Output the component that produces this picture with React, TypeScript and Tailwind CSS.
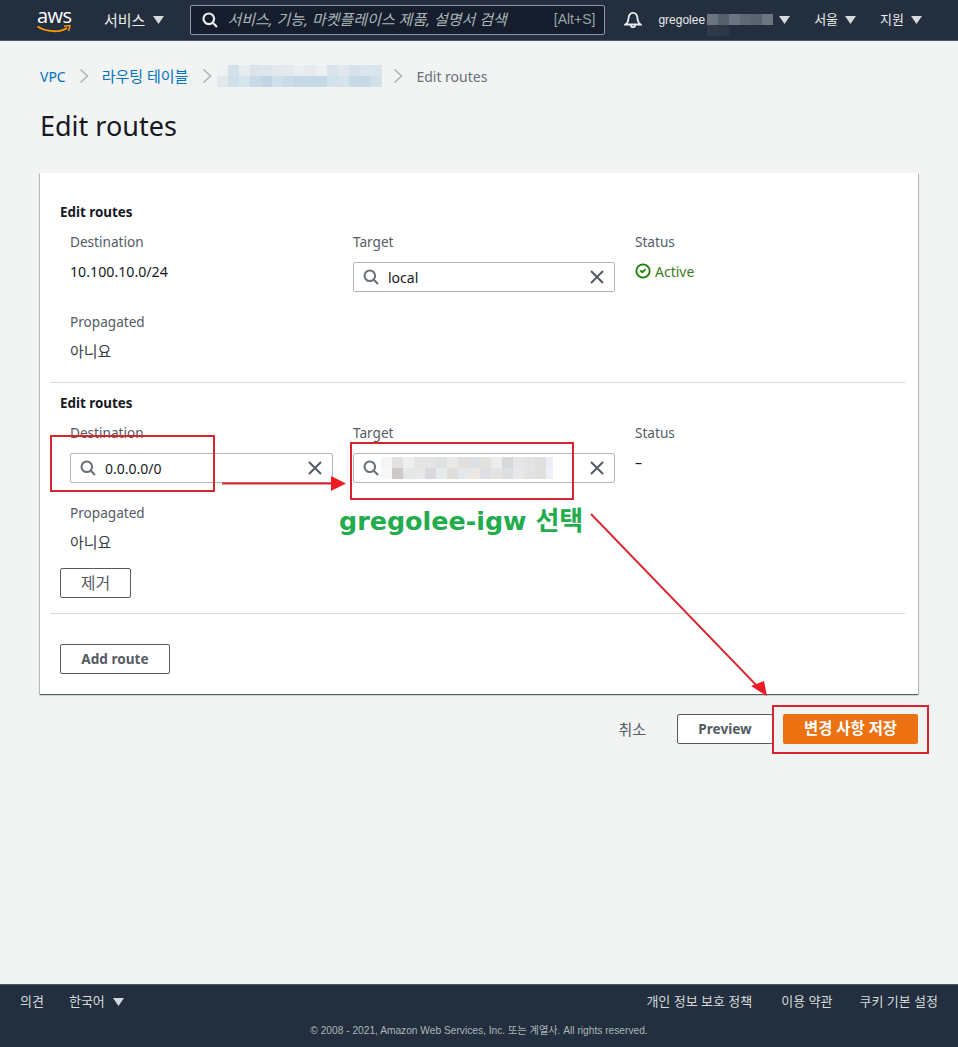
import { CircleCheck } from "lucide-react"

const crumbMosaic = [
  ["#eef1f2", "#d5e1ea", "#e6ecf0", "#dbe4eb", "#dfe6eb", "#e3e8ee", "#e4e9ed", "#ebeef0", "#e8ebee", "#ecf0f1", "#dbe3ec", "#e1e7ef", "#d6e2eb", "#dae5ed", "#dae4ec"],
  ["#e3e8ed", "#cfe0ea", "#d4e5ec", "#c9dae6", "#c2d5e4", "#cfe0ea", "#cadbe6", "#c6d8e6", "#c5d8e6", "#c5d8e6", "#d3e3ec", "#d6e3ea", "#c7d9e6", "#c7d9e6", "#d2e1e9"],
]

const targetMosaic = [
  ["#f4f4f4", "#e2e2e2", "#eeeeee", "#e4e4e4", "#e4e4e4", "#dde3e3", "#e9e9e9", "#e2e0de", "#dde0e2", "#e3e2df", "#ecedec", "#d7d8da", "#e6e6e9", "#e4e2e4", "#dfdfdd", "#e8eff8"],
  ["#f7f7f7", "#cdcac8", "#e2e8e8", "#e7e7e7", "#d9d9de", "#e6ecec", "#e0dedb", "#e3e8ec", "#ebe6e3", "#dddfe3", "#e4e4e2", "#dcdee0", "#e9e7ea", "#e4e2e2", "#e0e0dd", "#ecf2f8"],
]

const userMosaic = [
  ["#6b7480", "#565f6c", "#6c7480", "#5f6874", "#5a6470", "#6d7580"],
  ["#2f3a49", "#2d3846", "#232f3e", "#232f3e", "#232f3e", "#232f3e"],
]

const Mosaic = ({ rows }: { rows: string[][] }) => (
  <div className="flex flex-col">
    {rows.map((row, i) => (
      <div key={i} className="flex">
        {row.map((color, j) => (
          <div key={j} className="w-[11px] h-[11px] shrink-0" style={{ backgroundColor: color }} />
        ))}
      </div>
    ))}
  </div>
)

const Caret = () => (
  <svg width="11" height="8" viewBox="0 0 11 8" className="shrink-0">
    <path d="M0 0h11L5.5 8z" fill="#d5dbdb" />
  </svg>
)

const SearchIcon = ({ color = "#687078", width = 2 }: { color?: string; width?: number }) => (
  <svg width="16" height="16" viewBox="0 0 16 16" fill="none" className="shrink-0">
    <circle cx="6.8" cy="6.8" r="5.3" stroke={color} strokeWidth={width} />
    <path d="M10.8 10.8L15 15" stroke={color} strokeWidth={width} />
  </svg>
)

const ClearIcon = () => (
  <svg width="14" height="14" viewBox="0 0 14 14" fill="none" className="shrink-0">
    <path d="M1 1l12 12M13 1L1 13" stroke="#545b64" strokeWidth="2" />
  </svg>
)

const Chevron = () => (
  <svg width="10" height="16" viewBox="0 0 10 16" fill="none" className="shrink-0">
    <path d="M1.5 1.5L8.5 8l-7 6.5" stroke="#aab7b8" strokeWidth="1.6" />
  </svg>
)

const SearchField = ({ children }: { children: React.ReactNode }) => (
  <div className="flex items-center h-[30px] pl-[9px] pr-[10px] bg-white border border-[#aab7b8] rounded-[2px]">
    <SearchIcon />
    <div className="flex-1 ml-[9px] text-[14px] text-[#16191f]">{children}</div>
    <ClearIcon />
  </div>
)

const FieldLabel = ({ children }: { children: React.ReactNode }) => (
  <div className="h-5 leading-5 text-[13.6px] text-[#545b64]">{children}</div>
)

const RouteHeading = () => (
  <div className="h-5 leading-5 text-[13.4px] font-bold text-[#16191f] ml-[10px]">Edit routes</div>
)

const Propagated = () => (
  <div className="ml-5 mt-[20px]">
    <FieldLabel>Propagated</FieldLabel>
    <div className="mt-[9px] h-5 leading-5 text-[15px] text-[#3a3f47]">아니요</div>
  </div>
)

const OutlineButton = ({ children, className }: { children: React.ReactNode; className: string }) => (
  <button className={`h-[30px] flex items-center justify-center bg-white border border-[#545b64] rounded-[2px] text-[13.6px] font-bold text-[#545b64] ${className}`}>
    {children}
  </button>
)

export default function App() {
  return (
    <div className="relative flex flex-col h-[1047px] overflow-hidden bg-[#f2f3f3] font-['Noto_Sans','Noto_Sans_CJK_KR',sans-serif]">
      <header className="flex items-center h-[41px] shrink-0 bg-[#232f3e] border-b border-[#4b5664] text-[#eaeded] pb-[1px]">
        <div className="relative w-[34px] h-[30px] ml-[37px]">
          <span className="absolute left-0 -top-[2px] text-[20px] leading-[26px] tracking-[-0.5px] text-white font-['Open_Sans',sans-serif]">aws</span>
          <svg width="34" height="9" viewBox="0 0 34 9" fill="none" className="absolute left-0 top-[20px]">
            <path d="M0.5 1.5C9 7 23 8 30 3" stroke="#ff9900" strokeWidth="1.8" />
            <path d="M27 1.2L33 0.6L31.5 6" stroke="#ff9900" strokeWidth="1.4" />
          </svg>
        </div>
        <span className="ml-[33px] text-[15px] leading-5">서비스</span>
        <div className="ml-[8px]"><Caret /></div>
        <div className="flex items-center ml-[26px] w-[415px] h-[30px] pl-[11px] pr-[9px] bg-[#161e2d] border border-[#8d99a5] rounded-[2px]">
          <SearchIcon color="#eaeded" width={2.2} />
          <span className="ml-[9px] flex-1 text-[15px] italic text-[#aab7b8]">서비스, 기능, 마켓플레이스 제품, 설명서 검색</span>
          <span className="text-[14px] text-[#95a5a6] font-['Liberation_Sans',sans-serif]">[Alt+S]</span>
        </div>
        <svg width="18" height="18" viewBox="0 0 18 18" fill="none" className="ml-[19px] shrink-0">
          <path d="M1.5 13.5c2-1.5 2.8-3 3-6C4.8 3.6 6.5 1.8 9 1.8s4.2 1.8 4.5 5.7c.2 3 1 4.5 3 6z" stroke="#eaeded" strokeWidth="1.8" />
          <path d="M6.8 14a2.2 2.2 0 0 0 4.4 0" stroke="#eaeded" strokeWidth="1.8" />
        </svg>
        <span className="ml-[16px] text-[12px] font-['Liberation_Sans',sans-serif]">gregolee</span>
        <div className="ml-[2px] mt-[11px]"><Mosaic rows={userMosaic} /></div>
        <div className="ml-[6px]"><Caret /></div>
        <span className="ml-[24px] text-[13px]">서울</span>
        <div className="ml-[7px]"><Caret /></div>
        <span className="ml-[24px] text-[13px]">지원</span>
        <div className="ml-[7px]"><Caret /></div>
      </header>

      <main className="flex-1 px-10">
        <nav className="flex items-center h-[22px] mt-[24px] text-[14px]">
          <span className="text-[#0073bb]">VPC</span>
          <div className="ml-[13px]"><Chevron /></div>
          <span className="ml-[13px] text-[15px] text-[#0073bb]">라우팅 테이블</span>
          <div className="ml-[14px]"><Chevron /></div>
          <div className="ml-[5px]"><Mosaic rows={crumbMosaic} /></div>
          <div className="ml-[11px]"><Chevron /></div>
          <span className="ml-[13px] text-[#687078]">Edit routes</span>
        </nav>
        <h1 className="mt-[19px] h-[40px] leading-[40px] text-[27px] font-normal text-[#16191f]">Edit routes</h1>

        <section className="mt-[27px] h-[521px] pl-[10px] pr-[13px] pt-[29px] bg-white shadow-[0_1px_1px_0_rgba(0,28,36,0.5),1px_1px_1px_0_rgba(0,28,36,0.2),-1px_1px_1px_0_rgba(0,28,36,0.2)]">
          <RouteHeading />
          <div className="grid grid-cols-[263px_262px_1fr] gap-x-5 ml-5 mt-[10px]">
            <FieldLabel>Destination</FieldLabel>
            <FieldLabel>Target</FieldLabel>
            <FieldLabel>Status</FieldLabel>
            <div className="mt-[10px] h-5 leading-5 text-[14.2px] text-[#16191f]">10.100.10.0/24</div>
            <div className="mt-[10px]"><SearchField>local</SearchField></div>
            <div className="mt-[9px] flex items-center h-5 text-[14px] text-[#3b7a1e]">
              <CircleCheck size={16} strokeWidth={2.8} className="text-[#1d8102]" />
              <span className="ml-1">Active</span>
            </div>
          </div>
          <Propagated />
          <div className="mt-[21px] border-t border-[#d5dbdb]" />

          <div className="mt-[10px]"><RouteHeading /></div>
          <div className="grid grid-cols-[263px_262px_1fr] gap-x-5 ml-5 mt-[10px]">
            <FieldLabel>Destination</FieldLabel>
            <FieldLabel>Target</FieldLabel>
            <FieldLabel>Status</FieldLabel>
            <div className="mt-[10px]"><SearchField>0.0.0.0/0</SearchField></div>
            <div className="mt-[10px]">
              <SearchField>
                <div className="w-[172px] overflow-hidden -ml-[7px]">
                  <Mosaic rows={targetMosaic} />
                </div>
              </SearchField>
            </div>
            <div className="mt-[10px] h-5 leading-5 text-[14px] text-[#16191f]">–</div>
          </div>
          <Propagated />
          <OutlineButton className="mt-[16px] ml-[10px] w-[71px] !font-normal !text-[16px]">제거</OutlineButton>
          <div className="mt-[15px] border-t border-[#d5dbdb]" />
          <OutlineButton className="mt-[30px] ml-[10px] w-[110px]">Add route</OutlineButton>
        </section>

        <div className="flex items-center justify-end mt-5">
          <span className="text-[15px] text-[#545b64]">취소</span>
          <OutlineButton className="ml-[31px] w-[96px]">Preview</OutlineButton>
          <button className="ml-[10px] w-[135px] h-[30px] flex items-center justify-center bg-[#ec7211] rounded-[2px] text-[15.4px] font-bold text-white">변경 사항 저장</button>
        </div>
      </main>

      <footer className="h-[63px] shrink-0 bg-[#232f3e] border-t border-[#4b5664] text-[#d5dbdb]">
        <div className="flex items-center h-[33px] px-5 text-[13px]">
          <span>의견</span>
          <span className="ml-[25px]">한국어</span>
          <div className="ml-2"><Caret /></div>
          <div className="flex-1" />
          <span>개인 정보 보호 정책</span>
          <span className="ml-[29px]">이용 약관</span>
          <span className="ml-[27px]">쿠키 기본 설정</span>
        </div>
        <div className="mt-[5px] text-center text-[10.2px] leading-4 text-[#aab7b8] font-['Liberation_Sans','Noto_Sans_CJK_KR',sans-serif]">
          © 2008 - 2021, Amazon Web Services, Inc. 또는 계열사. All rights reserved.
        </div>
      </footer>

      {/* annotations pasted over the screenshot */}
      <div className="absolute left-[50px] top-[435px] w-[165px] h-[57px] border-2 border-[#d9232e]" />
      <div className="absolute left-[350px] top-[442px] w-[224px] h-[58px] border-2 border-[#d9232e]" />
      <div className="absolute left-[772px] top-[705px] w-[157px] h-[49px] border-2 border-[#d9232e]" />
      <svg width="958" height="1047" viewBox="0 0 958 1047" fill="none" className="absolute left-0 top-0 pointer-events-none">
        <path d="M222 483.5H332" stroke="#d9232e" strokeWidth="2" />
        <path d="M331 476L346 483.5L331 491z" fill="#ed1c24" />
        <path d="M591 514L760 689" stroke="#d9232e" strokeWidth="1.8" />
        <path d="M751 686L764 681L767 696z" fill="#ed1c24" />
      </svg>
      <div className="absolute left-[339px] top-[503px] text-[25.4px] leading-9 font-bold text-[#22ac4c] whitespace-nowrap font-['DejaVu_Sans','Noto_Sans_CJK_KR',sans-serif]">
        gregolee-igw <span className="text-[26px]">선택</span>
      </div>
    </div>
  )
}
